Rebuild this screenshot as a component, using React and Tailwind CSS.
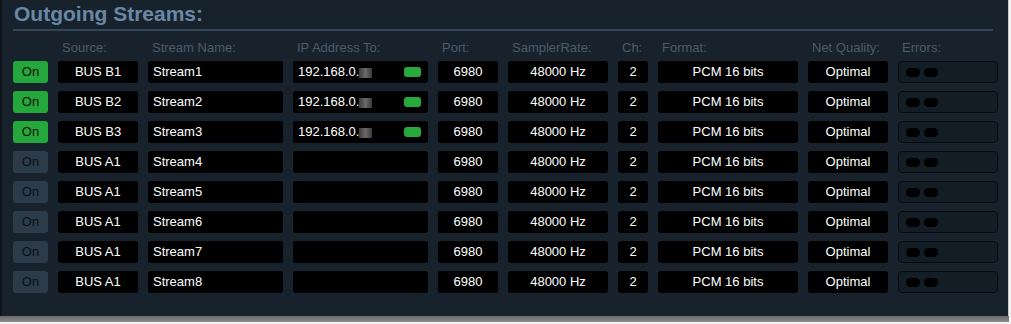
import React from 'react';

const rows = [
  { on: true, source: 'BUS B1', name: 'Stream1', ip: true },
  { on: true, source: 'BUS B2', name: 'Stream2', ip: true },
  { on: true, source: 'BUS B3', name: 'Stream3', ip: true },
  { on: false, source: 'BUS A1', name: 'Stream4', ip: false },
  { on: false, source: 'BUS A1', name: 'Stream5', ip: false },
  { on: false, source: 'BUS A1', name: 'Stream6', ip: false },
  { on: false, source: 'BUS A1', name: 'Stream7', ip: false },
  { on: false, source: 'BUS A1', name: 'Stream8', ip: false },
];

const cell = 'h-[22px] bg-black rounded-[3px] flex items-center text-white text-[13px]';

const StreamRow = ({ row }) => (
  <div className="flex gap-[10px]">
    <div
      className={`w-[35px] h-[22px] rounded-[3px] flex items-center justify-center text-[13px] ${
        row.on ? 'bg-[#25a83b] text-[#061006]' : 'bg-[#2c3b4a] text-[#0a1016]'
      }`}
    >
      On
    </div>
    <div className={`${cell} w-[80px] justify-center`}>{row.source}</div>
    <div className={`${cell} w-[135px] pl-[5px]`}>{row.name}</div>
    <div className={`${cell} w-[135px] pl-[5px] pr-[7px]`}>
      {row.ip && (
        <>
          <span>192.168.0.</span>
          <span className="w-[13px] h-[10px] mt-[1px] bg-gradient-to-r from-[#3c3c3c] via-[#6a6a6a] to-[#3a3a3a] blur-[0.6px]" />
          <span className="ml-auto w-[17px] h-[10px] rounded-[3px] bg-[#28a93c]" />
        </>
      )}
    </div>
    <div className={`${cell} w-[60px] justify-center`}>6980</div>
    <div className={`${cell} w-[100px] justify-center`}>48000 Hz</div>
    <div className={`${cell} w-[30px] justify-center`}>2</div>
    <div className={`${cell} w-[140px] justify-center`}>PCM 16 bits</div>
    <div className={`${cell} w-[80px] justify-center`}>Optimal</div>
    <div className="w-[100px] h-[22px] rounded-[4px] border border-[#070b0f] bg-[#131d26] flex items-center gap-[4px] pl-[7px]">
      <span className="w-[14px] h-[9px] rounded-full bg-black" />
      <span className="w-[14px] h-[9px] rounded-full bg-black" />
    </div>
  </div>
);

const labels = [
  ['Source:', 'w-[80px]'],
  ['Stream Name:', 'w-[135px]'],
  ['IP Address To:', 'w-[135px]'],
  ['Port:', 'w-[60px]'],
  ['SamplerRate:', 'w-[100px]'],
  ['Ch:', 'w-[30px]'],
  ['Format:', 'w-[140px]'],
  ['Net Quality:', 'w-[80px]'],
  ['Errors:', 'w-[100px]'],
];

export default function App() {
  return (
    <div className="w-[1011px] h-[324px] bg-[#f4f4f4] overflow-hidden" style={{ fontFamily: '"Liberation Sans", Arial, sans-serif' }}>
      <div className="w-[1009px] h-[322px] flex flex-col">
        <div className="h-[316px] bg-[#17222c] border-l-2 border-l-[#0d141a] border-r border-r-[#c9c9c9] pl-[11px] pt-[1px]">
          <h2 className="text-[21px] font-bold text-[#6988a5] leading-[26px] pl-[1px]">Outgoing Streams:</h2>
          <div className="w-[980px] h-[2px] bg-[#34465a] mt-[2px]" />
          <div className="flex gap-[10px] mt-[10px] h-[20px] text-[13px] text-[#4b5c6d] leading-[13px]">
            <div className="w-[35px]" />
            {labels.map(([t, w]) => (
              <div key={t} className={`${w} pl-[4px]`}>{t}</div>
            ))}
          </div>
          <div className="flex flex-col gap-[8px]">
            {rows.map((r, i) => (
              <StreamRow key={i} row={r} />
            ))}
          </div>
        </div>
        <div className="h-[6px] bg-gradient-to-b from-[#6a6a6a] to-[#8c8c8c]" />
      </div>
    </div>
  );
}
